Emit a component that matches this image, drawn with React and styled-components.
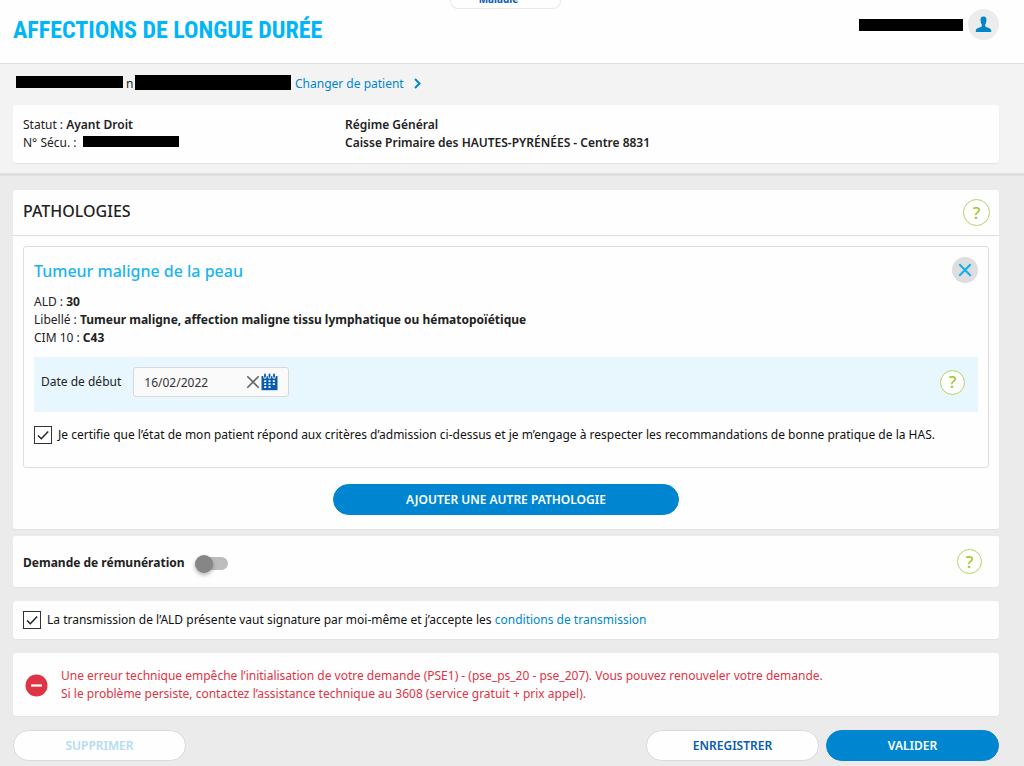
import React, { useState } from "react";
import styled, { createGlobalStyle } from "styled-components";

const GlobalStyle = createGlobalStyle`
  * {
    box-sizing: border-box;
  }
  body {
    margin: 0;
    background: #ebebeb;
    color: #222;
    font-family: "Noto Sans", "Open Sans", sans-serif;
    font-size: 12px;
    line-height: 18px;
  }
  button, input {
    font-family: inherit;
    font-size: inherit;
  }
  h1, h2, h3, p {
    margin: 0;
  }
  a {
    color: #0086d1;
    text-decoration: none;
  }
  b {
    font-weight: 600;
  }
`;

const Header = styled.header`
  position: relative;
  display: flex;
  justify-content: space-between;
  align-items: flex-start;
  height: 64px;
  padding: 9px 25px 0 13px;
  background: #fefefe;
  border-bottom: 1px solid #e0e0e0;
`;

const Title = styled.h1`
  color: #00b5f8;
  font-family: "Roboto Condensed", "Liberation Sans Narrow", sans-serif;
  font-size: 24px;
  font-weight: 700;
  line-height: 42px;
  white-space: nowrap;
`;

const Tab = styled.div`
  position: absolute;
  top: 0;
  left: 450px;
  width: 111px;
  height: 9px;
  padding-right: 14px;
  overflow: hidden;
  border: 1px solid #e8e8e8;
  border-top: 0;
  border-radius: 0 0 8px 8px;
  color: #0a5cad;
  font-size: 10px;
  font-weight: 700;
  text-align: center;

  span {
    display: block;
    margin-top: -10px;
    line-height: 18px;
  }
`;

const User = styled.div`
  display: flex;
  align-items: center;
  gap: 5px;
`;

const Avatar = styled.button`
  display: flex;
  align-items: center;
  justify-content: center;
  width: 31px;
  height: 31px;
  padding: 0;
  border: 0;
  border-radius: 50%;
  background: #ececec;
`;

const Mask = styled.span`
  display: inline-block;
  width: ${(props) => props.$width}px;
  height: ${(props) => props.$height || 12}px;
  background: #000;
`;

const PatientBar = styled.section`
  padding: 9px 25px 10px 13px;
  background: #f3f3f3;
  border-bottom: 3px solid #e0e0e0;
`;

const PatientLine = styled.div`
  display: flex;
  align-items: center;
  height: 18px;
  padding-left: 3px;
  margin-bottom: 14px;

  a {
    display: flex;
    align-items: center;
    gap: 10px;
    margin-left: 4px;
    padding-top: 3px;
  }
`;

const Initial = styled.span`
  width: 12px;
  padding: 3px 0 0 3px;
  overflow: hidden;
`;

const Card = styled.section`
  background: #fefefe;
  border-radius: 3px;
  box-shadow: 0 1px 1px #e2e2e2;
`;

const PatientCard = styled(Card)`
  display: grid;
  grid-template-columns: 322px 1fr;
  padding: 11px 10px;

  ${Mask} {
    margin-left: 3px;
  }
`;

const Content = styled.main`
  padding: 14px 25px 5px 13px;
`;

const CardHeader = styled.div`
  display: flex;
  align-items: center;
  justify-content: space-between;
  height: 46px;
  padding: 0 9px 0 10px;
  border-bottom: 1px solid #dedede;

  h2 {
    padding-bottom: 4px;
    font-size: 16px;
    font-weight: 500;
  }
`;

const HelpButton = styled.button`
  flex: none;
  width: ${(props) => props.$size || 25}px;
  height: ${(props) => props.$size || 25}px;
  padding: 0;
  border: 1px solid #b4d465;
  border-radius: 50%;
  background: #fff;
  color: #a2c62f;
  font-size: 17px;
  font-weight: 500;
  line-height: 20px;
`;

const CardBody = styled.div`
  display: flex;
  flex-direction: column;
  align-items: center;
  padding: 10px 10px 14px;
`;

const Pathology = styled.article`
  width: 100%;
  min-height: 222px;
  margin-bottom: 16px;
  padding: 10px;
  border: 1px solid #dedede;
  border-radius: 3px;

  p b {
    font-weight: 700;
  }
`;

const PathologyTitle = styled.div`
  display: flex;
  align-items: flex-start;
  justify-content: space-between;
  margin-bottom: 8px;

  h3 {
    color: #19b4f1;
    font-size: 16px;
    font-weight: 500;
    line-height: 28px;
  }
`;

const CloseButton = styled.button`
  display: flex;
  align-items: center;
  justify-content: center;
  width: 26px;
  height: 26px;
  padding: 0;
  border: 0;
  border-radius: 50%;
  background: #dedede;
`;

const DateRow = styled.div`
  display: flex;
  align-items: center;
  height: 55px;
  margin: 10px 0;
  padding: 0 13px 5px 7px;
  background: #e8f7fe;

  ${HelpButton} {
    margin-left: auto;
  }
`;

const DateField = styled.div`
  display: flex;
  align-items: center;
  width: 156px;
  height: 30px;
  margin-left: 12px;
  padding: 0 10px;
  border: 1px solid #d8d8d8;
  border-radius: 3px;
  background: #fafafa;

  input {
    flex: 1;
    min-width: 0;
    padding: 0;
    border: 0;
    outline: 0;
    background: none;
    color: #333;
  }
  button {
    display: flex;
    padding: 0;
    border: 0;
    background: none;
  }
`;

const Check = styled.label`
  display: flex;
  align-items: center;
  gap: 6px;
  height: ${(props) => props.$height || 26}px;
  color: #111;

  input {
    appearance: none;
    flex: none;
    width: 18px;
    height: 18px;
    margin: 0;
    border: 1px solid #333;
    background: #fff;
  }
  input:checked {
    background: #fff
      url("data:image/svg+xml,%3Csvg xmlns='http://www.w3.org/2000/svg' viewBox='0 0 16 16'%3E%3Cpath d='M3 8.5l3.3 3.2L13.2 4.6' fill='none' stroke='%23222' stroke-width='1.5'/%3E%3C/svg%3E")
      center / 16px 16px no-repeat;
  }
`;

const PillButton = styled.button`
  width: ${(props) => (props.$wide ? 346 : 173)}px;
  height: 31px;
  padding: 0;
  border: 1px solid ${(props) => (props.$primary ? "#0086d1" : "#dadada")};
  border-radius: 16px;
  background: ${(props) => (props.$primary ? "#0086d1" : "#fefefe")};
  color: ${(props) => (props.$primary ? "#fff" : "#0a5cad")};
  font-weight: 600;

  &:disabled {
    color: #b3dcf3;
  }
`;

const PaymentCard = styled(Card)`
  display: flex;
  align-items: center;
  height: 51px;
  margin-top: 7px;
  padding: 0 17px 0 10px;

  label {
    padding-top: 2px;
    font-weight: 700;
  }
  ${HelpButton} {
    margin-left: auto;
  }
`;

const Switch = styled.input`
  appearance: none;
  display: flex;
  align-items: center;
  width: 32px;
  height: 13px;
  margin: 4px 0 0 11px;
  border-radius: 7px;
  background: #bdbdbd;

  &::before {
    content: "";
    width: 18px;
    height: 18px;
    margin-left: -1px;
    border-radius: 50%;
    background: #868686;
    box-shadow: 0 2px 4px rgba(0, 0, 0, 0.3);
  }
  &:checked::before {
    margin-left: 15px;
  }
`;

const ConsentCard = styled(Card)`
  margin-top: 14px;
  padding: 0 10px;
`;

const ErrorCard = styled(Card)`
  display: flex;
  align-items: center;
  gap: 13px;
  margin-top: 14px;
  padding: 14px 12px 13px;
  color: #df3445;
`;

const Actions = styled.footer`
  display: flex;
  gap: 7px;
  margin-top: 14px;

  button:first-child {
    margin-right: auto;
  }
`;

const UserIcon = () => (
  <svg width="17" height="17" viewBox="0 0 17 17" fill="#0086c3">
    <path d="M8.5 0.5C5.9 0.5 5.3 2.3 5.6 4.7C5.7 6.4 6.2 7.6 6.8 8.5V10.6C6 11.3 1.2 12.1 0.8 14.3V16H16.2V14.3C15.8 12.1 11 11.3 10.2 10.6V8.5C10.8 7.6 11.3 6.4 11.4 4.7C11.7 2.3 11.1 0.5 8.5 0.5Z" />
  </svg>
);

const ChevronIcon = () => (
  <svg width="7" height="11" viewBox="0 0 7 11" fill="none" stroke="#0086d1" strokeWidth="2">
    <path d="M1 1l4.5 4.5L1 10" />
  </svg>
);

const CrossIcon = ({ color, width = 2 }) => (
  <svg width="14" height="14" viewBox="0 0 14 14" fill="none" stroke={color} strokeWidth={width}>
    <path d="M1.3 1.3l11.4 11.4M12.7 1.3L1.3 12.7" />
  </svg>
);

const CalendarIcon = () => (
  <svg width="18" height="18" viewBox="0 0 18 18">
    <path d="M1.5 3h16v14.2h-16z" fill="#0a5cad" />
    <path d="M5 1v3M9.5 1v3M14 1v3" stroke="#fafafa" strokeWidth="3.4" strokeLinecap="round" />
    <path d="M5 1.4v2.4M9.5 1.4v2.4M14 1.4v2.4" stroke="#0a5cad" strokeWidth="1.8" strokeLinecap="round" />
    <path
      d="M4.2 8.2h2M8.5 8.2h2M12.8 8.2h2M4.2 11.2h2M8.5 11.2h2M12.8 11.2h2M4.2 14.2h2M8.5 14.2h2"
      stroke="#fff"
      strokeWidth="1.7"
    />
  </svg>
);

const ErrorIcon = () => (
  <svg width="23" height="23" viewBox="0 0 23 23">
    <circle cx="11.5" cy="11.5" r="11" fill="#df3445" />
    <path d="M6 11.5h11" stroke="#fff" strokeWidth="2.2" />
  </svg>
);

const App = () => {
  const [date, setDate] = useState("16/02/2022");

  return (
    <div>
      <GlobalStyle />
      <Header>
        <Title>AFFECTIONS DE LONGUE DURÉE</Title>
        <Tab>
          <span>Maladie</span>
        </Tab>
        <User>
          <Mask $width={104} />
          <Avatar aria-label="Mon compte">
            <UserIcon />
          </Avatar>
        </User>
      </Header>

      <PatientBar>
        <PatientLine>
          <Mask $width={107} />
          <Initial>n</Initial>
          <Mask $width={156} $height={15} />
          <a href="#patient">
            Changer de patient
            <ChevronIcon />
          </a>
        </PatientLine>
        <PatientCard>
          <div>
            <p>
              Statut : <b>Ayant Droit</b>
            </p>
            <p>
              N° Sécu. : <Mask $width={96} $height={11} />
            </p>
          </div>
          <div>
            <p>
              <b>Régime Général</b>
            </p>
            <p>
              <b>Caisse Primaire des HAUTES-PYRÉNÉES - Centre 8831</b>
            </p>
          </div>
        </PatientCard>
      </PatientBar>

      <Content>
        <Card>
          <CardHeader>
            <h2>PATHOLOGIES</h2>
            <HelpButton $size={27}>?</HelpButton>
          </CardHeader>
          <CardBody>
            <Pathology>
              <PathologyTitle>
                <h3>Tumeur maligne de la peau</h3>
                <CloseButton aria-label="Retirer">
                  <CrossIcon color="#10aeee" />
                </CloseButton>
              </PathologyTitle>
              <p>
                ALD : <b>30</b>
              </p>
              <p>
                Libellé : <b>Tumeur maligne, affection maligne tissu lymphatique ou hématopoïétique</b>
              </p>
              <p>
                CIM 10 : <b>C43</b>
              </p>
              <DateRow>
                <label htmlFor="debut">Date de début</label>
                <DateField>
                  <input id="debut" value={date} onChange={(e) => setDate(e.target.value)} />
                  <button aria-label="Effacer" onClick={() => setDate("")}>
                    <CrossIcon color="#666" width={1.6} />
                  </button>
                  <button aria-label="Calendrier">
                    <CalendarIcon />
                  </button>
                </DateField>
                <HelpButton>?</HelpButton>
              </DateRow>
              <Check>
                <input type="checkbox" defaultChecked />
                <span>
                  Je certifie que l’état de mon patient répond aux critères d’admission ci-dessus et je m’engage à
                  respecter les recommandations de bonne pratique de la HAS.
                </span>
              </Check>
            </Pathology>
            <PillButton $primary $wide>
              AJOUTER UNE AUTRE PATHOLOGIE
            </PillButton>
          </CardBody>
        </Card>

        <PaymentCard>
          <label htmlFor="remuneration">Demande de rémunération</label>
          <Switch type="checkbox" role="switch" id="remuneration" />
          <HelpButton>?</HelpButton>
        </PaymentCard>

        <ConsentCard>
          <Check $height={38}>
            <input type="checkbox" defaultChecked />
            <span>
              La transmission de l’ALD présente vaut signature par moi-même et j’accepte les{" "}
              <a href="#conditions">conditions de transmission</a>
            </span>
          </Check>
        </ConsentCard>

        <ErrorCard role="alert">
          <ErrorIcon />
          <div>
            <p>
              Une erreur technique empêche l’initialisation de votre demande (PSE1) - (pse_ps_20 - pse_207). Vous pouvez
              renouveler votre demande.
            </p>
            <p>Si le problème persiste, contactez l’assistance technique au 3608 (service gratuit + prix appel).</p>
          </div>
        </ErrorCard>

        <Actions>
          <PillButton disabled>SUPPRIMER</PillButton>
          <PillButton>ENREGISTRER</PillButton>
          <PillButton $primary>VALIDER</PillButton>
        </Actions>
      </Content>
    </div>
  );
};

export default App;
